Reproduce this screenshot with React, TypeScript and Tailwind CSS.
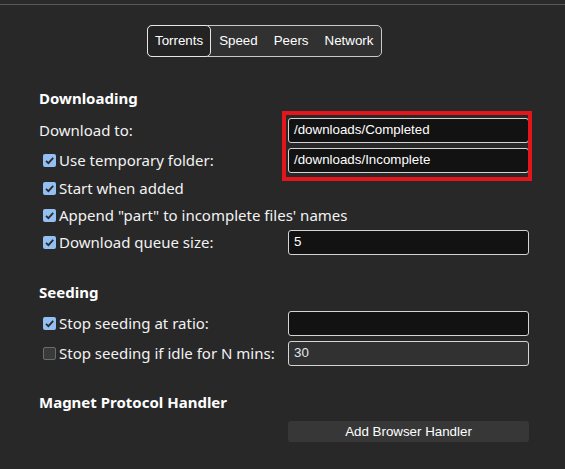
import type { ReactNode } from "react";

const labelFont = { fontFamily: '"Noto Sans", "Open Sans", sans-serif' };
const ctrlFont = { fontFamily: '"Liberation Sans", Arial, sans-serif' };

function Check({ checked }: { checked: boolean }) {
  if (!checked) {
    return (
      <span className="mr-[3px] ml-[4px] inline-block h-[13px] w-[13px] shrink-0 rounded-[2px] border border-[#6b6b6b] bg-[#3a3a3a]" />
    );
  }
  return (
    <span className="mr-[3px] ml-[4px] flex h-[13px] w-[13px] shrink-0 items-center justify-center rounded-[2px] bg-[#93bff2]">
      <svg viewBox="0 0 13 13" className="h-[13px] w-[13px]">
        <path d="M3 6.8 L5.4 9.1 L10.2 3.8" fill="none" stroke="#2b2b2b" strokeWidth="1.8" />
      </svg>
    </span>
  );
}

function Field({ value, disabled }: { value: string; disabled?: boolean }) {
  return (
    <div
      style={ctrlFont}
      className={
        "flex h-[25px] w-[241px] items-center rounded-[3px] border border-[#d4d4d4] px-[5px] text-[13.33px] " +
        (disabled ? "bg-[#313131] text-[#e2e8ec]" : "bg-[#121212] text-white")
      }
    >
      {value}
    </div>
  );
}

function Row({
  h,
  label,
  checked,
  children,
}: {
  h: string;
  label: string;
  checked?: boolean;
  children?: ReactNode;
}) {
  return (
    <div className={"flex items-center " + h}>
      <div
        className="flex w-[249px] shrink-0 items-center whitespace-nowrap text-[15px] text-[#f2f2f2]"
        style={labelFont}
      >
        {checked !== undefined && <Check checked={checked} />}
        <span>{label}</span>
      </div>
      {children}
    </div>
  );
}

const tabs = ["Torrents", "Speed", "Peers", "Network"];

export default function App() {
  return (
    <div className="h-[469px] w-[565px] overflow-hidden bg-[#282828]">
      <div className="h-[4px] bg-[#2a2a2a]" />
      <div className="h-px bg-[#5a5a5a]" />

      {/* Tabs */}
      <div className="mt-[20px] flex pl-[147px]">
        <div
          style={ctrlFont}
          className="flex h-[32px] items-stretch rounded-[5px] border border-[#c9c9c9] bg-[#313131] text-[13.33px] text-white"
        >
          {tabs.map((t, i) => (
            <div
              key={t}
              className={
                "flex items-center " +
                (i === 0
                  ? "-my-px -ml-px rounded-[5px] border border-[#e6e6e6] bg-[#232323] px-[7px]"
                  : "px-[8px]")
              }
            >
              {t}
            </div>
          ))}
        </div>
      </div>

      <div className="pl-[39px]">
        {/* Downloading */}
        <div className="mt-[31px] h-[20px] text-[15px] font-bold leading-[20px] text-white" style={labelFont}>
          Downloading
        </div>

        <div className="relative mt-[7px]">
          <Row h="h-[30px]" label="Download to:">
            <Field value="/downloads/Completed" />
          </Row>
          <Row h="h-[30px]" label="Use temporary folder:" checked>
            <Field value="/downloads/Incomplete" />
          </Row>
          <div className="pointer-events-none absolute top-[-4px] left-[243px] h-[70px] w-[250px] border-[4px] border-[#e4161c]" />
        </div>
        <Row h="h-[27px]" label="Start when added" checked />
        <Row h="h-[26px]" label={'Append "part" to incomplete files\' names'} checked />
        <Row h="h-[28px]" label="Download queue size:" checked>
          <Field value="5" />
        </Row>

        {/* Seeding */}
        <div className="mt-[26px] h-[20px] text-[15px] font-bold leading-[20px] text-white" style={labelFont}>
          Seeding
        </div>
        <div className="mt-[6px]">
          <Row h="h-[30px]" label="Stop seeding at ratio:" checked>
            <Field value="" />
          </Row>
          <Row h="h-[30px]" label="Stop seeding if idle for N mins:" checked={false}>
            <Field value="30" disabled />
          </Row>
        </div>

        {/* Magnet */}
        <div className="mt-[24px] h-[20px] text-[15px] font-bold leading-[20px] text-white" style={labelFont}>
          Magnet Protocol Handler
        </div>
        <div className="mt-[9px] flex pl-[249px]">
          <div
            style={ctrlFont}
            className="flex h-[21px] w-[241px] items-center justify-center rounded-[3px] bg-[#373737] text-[13.33px] text-white"
          >
            Add Browser Handler
          </div>
        </div>
      </div>
    </div>
  );
}
